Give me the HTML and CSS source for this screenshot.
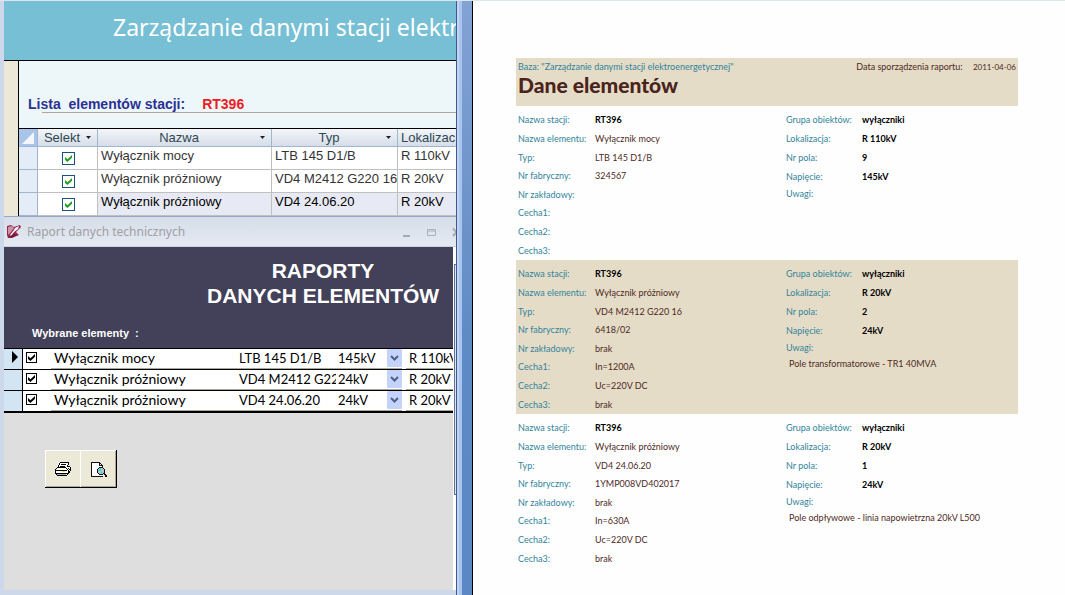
FILE: index.html
```html
<!DOCTYPE html>
<html lang="pl">
<head>
<meta charset="utf-8">
<title>Zarządzanie danymi stacji</title>
<link rel="stylesheet" href="styles.css">
</head>
<body>
<div class="desktop">
  <div class="forms">
    <section class="station">
      <h1 class="station-title">Zarządzanie danymi stacji elektr</h1>
      <div class="station-body">
        <div class="station-caption">
          <span class="caption-label">Lista&nbsp; elementów stacji:</span>
          <span class="caption-value">RT396</span>
        </div>
        <table class="sheet">
          <colgroup><col class="c-mark"><col class="c-sel"><col class="c-name"><col class="c-type"><col></colgroup>
          <thead>
            <tr>
              <th class="corner"><svg width="12" height="12" viewBox="0 0 12 12"><path d="M12 0V12H0z" fill="#f4f8fd"/></svg></th>
              <th><div class="head"><span>Selekt</span><svg class="tri" viewBox="0 0 5 3"><path d="M0 0h5L2.500 3z"/></svg></div></th>
              <th><div class="head"><span>Nazwa</span><svg class="tri" viewBox="0 0 5 3"><path d="M0 0h5L2.500 3z"/></svg></div></th>
              <th><div class="head"><span>Typ</span><svg class="tri" viewBox="0 0 5 3"><path d="M0 0h5L2.500 3z"/></svg></div></th>
              <th><div class="head start">Lokalizac</div></th>
            </tr>
          </thead>
          <tbody>
            <tr><td class="mark"></td><td class="tick"><input type="checkbox" class="check green" aria-label="Wybierz LTB 145 D1/B" checked></td><td>Wyłącznik mocy</td><td>LTB 145 D1/B</td><td>R 110kV</td></tr>
            <tr><td class="mark"></td><td class="tick"><input type="checkbox" class="check green" aria-label="Wybierz VD4 M2412 G220 16" checked></td><td>Wyłącznik próżniowy</td><td>VD4 M2412 G220 16</td><td>R 20kV</td></tr>
            <tr class="current"><td class="mark"></td><td class="tick"><input type="checkbox" class="check green" aria-label="Wybierz VD4 24.06.20" checked></td><td>Wyłącznik próżniowy</td><td>VD4 24.06.20</td><td>R 20kV</td></tr>
          </tbody>
        </table>
      </div>
    </section>

    <section class="dialog">
      <header class="titlebar">
        <svg width="16" height="16" viewBox="0 0 16 16"><path d="M1 2L5 1L8 3L14 1L15 3L10 8L13 11L6 14L2 14L1 11z" fill="#96284f"/><path d="M2 3L6 2L8 4L5 8L2 11z" fill="#c994ac"/><path d="M9 4L13 2L12 5L8 8L5 12L4 11L8 6z" fill="#fff"/><path d="M3 13L8 10L11 11L5 14z" fill="#6d1a3a"/></svg>
        <h2 class="dialog-name">Raport danych technicznych</h2>
        <div class="window-buttons">
          <button type="button" aria-label="Minimalizuj"><svg width="10" height="10" viewBox="0 0 10 10"><path d="M1 8h7v2H1z" fill="#a3abb8"/></svg></button>
          <button type="button" aria-label="Maksymalizuj"><svg width="10" height="10" viewBox="0 0 10 10"><path d="M.5 2.500h8v6h-8zM.5 4h8" fill="none" stroke="#a9b2c0"/></svg></button>
          <button type="button" aria-label="Zamknij"><svg width="10" height="10" viewBox="0 0 10 10"><path d="M1 1.500L8 9M8 1.500L1 9" fill="none" stroke="#a3abb8" stroke-width="2"/></svg></button>
        </div>
      </header>
      <div class="dialog-main">
        <div class="dialog-form">
          <div class="banner">
            <h3 class="banner-title">RAPORTY<br>DANYCH ELEMENTÓW</h3>
            <p class="banner-note">Wybrane elementy&nbsp; :</p>
          </div>
          <ul class="records">
            <li class="record">
              <span class="pointer"><svg width="6" height="12" viewBox="0 0 6 12"><path d="M0 0L6 6L0 12z"/></svg></span>
              <span class="pick"><input type="checkbox" class="check black" aria-label="Drukuj LTB 145 D1/B" checked></span>
              <span class="field name">Wyłącznik mocy</span><span class="field">LTB 145 D1/B</span>
              <span class="combo"><select aria-label="Napięcie"><option>145kV</option></select><svg width="15" height="18" viewBox="0 0 15 18"><rect width="15" height="18" rx="1" fill="#c3d3fb"/><path d="M4 7L7.500 10.500L11 7" fill="none" stroke="#4d6185" stroke-width="2"/></svg></span>
              <span class="field">R 110kV</span>
            </li>
            <li class="record">
              <span class="pointer"></span>
              <span class="pick"><input type="checkbox" class="check black" aria-label="Drukuj VD4 M2412 G220 16" checked></span>
              <span class="field name">Wyłącznik próżniowy</span><span class="field">VD4 M2412 G22</span>
              <span class="combo"><select aria-label="Napięcie"><option>24kV</option></select><svg width="15" height="18" viewBox="0 0 15 18"><rect width="15" height="18" rx="1" fill="#c3d3fb"/><path d="M4 7L7.500 10.500L11 7" fill="none" stroke="#4d6185" stroke-width="2"/></svg></span>
              <span class="field">R 20kV</span>
            </li>
            <li class="record">
              <span class="pointer"></span>
              <span class="pick"><input type="checkbox" class="check black" aria-label="Drukuj VD4 24.06.20" checked></span>
              <span class="field name">Wyłącznik próżniowy</span><span class="field">VD4 24.06.20</span>
              <span class="combo"><select aria-label="Napięcie"><option>24kV</option></select><svg width="15" height="18" viewBox="0 0 15 18"><rect width="15" height="18" rx="1" fill="#c3d3fb"/><path d="M4 7L7.500 10.500L11 7" fill="none" stroke="#4d6185" stroke-width="2"/></svg></span>
              <span class="field">R 20kV</span>
            </li>
          </ul>
          <div class="actions">
            <button type="button" aria-label="Drukuj">
              <svg width="16" height="14" viewBox="0 0 16 14" shape-rendering="crispEdges"><path d="M5 0h9v1l-1 3h2v1h1v4h-1v2h-1v1h-1v2H2v-1H0V7h1V6h1V5h1V4h1V2h1z" fill="#fff"/><path d="M5 0h9v1H5zM4 1h1v2H4zM13 1h1v2h-1zM3 3h1v2H3zM12 3h1v2h-1zM6 2h5v1H6zM5 4h5v1H5zM2 5h9v1H2zM1 6h1v1H1zM13 4h2v1h-2zM15 5h1v4h-1zM11 6h1v1h-1zM13 6h1v1h-1zM12 7h1v1h-1zM14 7h1v1h-1zM0 8h12v1H0zM0 7h1v5H0zM13 8h1v4h-1zM14 9h1v2h-1zM1 11h12v1H1zM1 12h1v1H1zM12 12h1v1h-1zM2 13h10v1H2z" fill="#000"/><path d="M7 9h3v1H7z" fill="#ee0"/><path d="M2 12h9v1H2z" fill="#aaa"/></svg>
            </button>
            <button type="button" aria-label="Podgląd wydruku">
              <svg width="16" height="15" viewBox="0 0 16 15" shape-rendering="crispEdges"><path d="M1 1h8v3h3v10H1z" fill="#fff"/><path d="M0 0h9v1H0zM0 0h1v15H0zM0 14h12v1H0zM8 1h1v3H8zM9 1h1v1H9zM10 2h1v1h-1zM11 3h1v2h-1zM9 3h2v1H9zM8 5h4v1H8zM7 6h1v1H7zM6 7h1v4H6zM7 11h1v1H7zM8 12h4v1H8zM12 6h1v1h-1zM13 7h1v4h-1zM12 11h2v1h-2zM13 12h2v1h-2zM14 13h2v2h-2z" fill="#111"/><path d="M8 6h4v1h1v4h-1v1H8v-1H7V7h1z" fill="#b9c0c2"/><path d="M8 7h2v1H8zM7 8h2v1H7zM9 6h1v3H9zM10 10h2v1h-2z" fill="#18e5e5"/></svg>
            </button>
          </div>
        </div>
        <div class="scroll"><div class="thumb"></div></div>
      </div>
    </section>
  </div>

  <div class="divider"></div>

  <main class="report">
    <header class="report-head">
      <div><p class="report-base">Baza: "Zarządzanie danymi stacji elektroenergetycznej"</p><h2 class="report-title">Dane elementów</h2></div>
      <p class="report-date">Data sporządzenia raportu: <time>2011-04-06</time></p>
    </header>

    <section class="item">
      <dl class="props">
        <dt>Nazwa stacji:</dt><dd class="key">RT396</dd>
        <dt>Nazwa elementu:</dt><dd>Wyłącznik mocy</dd>
        <dt>Typ:</dt><dd>LTB 145 D1/B</dd>
        <dt>Nr fabryczny:</dt><dd>324567</dd>
        <dt>Nr zakładowy:</dt><dd></dd>
        <dt>Cecha1:</dt><dd></dd>
        <dt>Cecha2:</dt><dd></dd>
        <dt>Cecha3:</dt><dd></dd>
      </dl>
      <dl class="props side">
        <dt>Grupa obiektów:</dt><dd class="key">wyłączniki</dd>
        <dt>Lokalizacja:</dt><dd class="key">R 110kV</dd>
        <dt>Nr pola:</dt><dd class="key">9</dd>
        <dt>Napięcie:</dt><dd class="key">145kV</dd>
        <dt>Uwagi:</dt><dd class="note"></dd>
      </dl>
    </section>

    <section class="item shaded">
      <dl class="props">
        <dt>Nazwa stacji:</dt><dd class="key">RT396</dd>
        <dt>Nazwa elementu:</dt><dd>Wyłącznik próżniowy</dd>
        <dt>Typ:</dt><dd>VD4 M2412 G220 16</dd>
        <dt>Nr fabryczny:</dt><dd>6418/02</dd>
        <dt>Nr zakładowy:</dt><dd>brak</dd>
        <dt>Cecha1:</dt><dd>In=1200A</dd>
        <dt>Cecha2:</dt><dd>Uc=220V DC</dd>
        <dt>Cecha3:</dt><dd>brak</dd>
      </dl>
      <dl class="props side">
        <dt>Grupa obiektów:</dt><dd class="key">wyłączniki</dd>
        <dt>Lokalizacja:</dt><dd class="key">R 20kV</dd>
        <dt>Nr pola:</dt><dd class="key">2</dd>
        <dt>Napięcie:</dt><dd class="key">24kV</dd>
        <dt>Uwagi:</dt><dd class="note">Pole transformatorowe - TR1 40MVA</dd>
      </dl>
    </section>

    <section class="item">
      <dl class="props">
        <dt>Nazwa stacji:</dt><dd class="key">RT396</dd>
        <dt>Nazwa elementu:</dt><dd>Wyłącznik próżniowy</dd>
        <dt>Typ:</dt><dd>VD4 24.06.20</dd>
        <dt>Nr fabryczny:</dt><dd>1YMP008VD402017</dd>
        <dt>Nr zakładowy:</dt><dd>brak</dd>
        <dt>Cecha1:</dt><dd>In=630A</dd>
        <dt>Cecha2:</dt><dd>Uc=220V DC</dd>
        <dt>Cecha3:</dt><dd>brak</dd>
      </dl>
      <dl class="props side">
        <dt>Grupa obiektów:</dt><dd class="key">wyłączniki</dd>
        <dt>Lokalizacja:</dt><dd class="key">R 20kV</dd>
        <dt>Nr pola:</dt><dd class="key">1</dd>
        <dt>Napięcie:</dt><dd class="key">24kV</dd>
        <dt>Uwagi:</dt><dd class="note">Pole odpływowe - linia napowietrzna 20kV L500</dd>
      </dl>
    </section>
  </main>
</div>
</body>
</html>
```
FILE: styles.css
```css
* { box-sizing: border-box; }
body, h1, h2, h3, p, ul, dl, dd { margin: 0; padding: 0; }
body { font-family: "Liberation Sans", Arial, sans-serif; font-size: 14px; background: #fff; }
svg { display: block; flex: none; }
button { appearance: none; border: 0; padding: 0; background: none; display: grid; place-items: center; }

.desktop {
  display: grid;
  grid-template-columns: minmax(0, 456fr) 17px minmax(0, 592fr);
  min-height: 100vh;
  border-top: 1px solid #dce6f1;
}
.forms { display: flex; flex-direction: column; min-width: 0; }

/* Station window */
.station { border-left: 4px solid #cdd9ea; }
.station-title {
  height: 60px;
  padding-left: 109px;
  border-bottom: 1px solid #000;
  background: #76bfd4;
  color: #fff;
  font: 400 23px/52px "Noto Sans", "Open Sans", sans-serif;
  white-space: nowrap;
  overflow: hidden;
}
.station-body { padding-left: 14px; background: #ece8d8; }
.station-caption {
  display: flex;
  align-items: center;
  gap: 17px;
  height: 67px;
  padding: 18px 0 0 9px;
  border-left: 1px solid #000;
  background: linear-gradient(#b0a596, #b0a596) 23px 51px / 100% 1px no-repeat #edf6f9;
  font-weight: 700;
  white-space: nowrap;
}
.caption-label { color: #2b3193; }
.caption-value { color: #ed1c24; }

.sheet {
  width: 100%;
  table-layout: fixed;
  border-collapse: separate;
  border-spacing: 0;
  border: solid #000;
  border-width: 1px 0 0 1px;
  background: #fff;
  color: #333;
  font-size: 13px;
}
.c-mark { width: 19px; }
.c-sel { width: 60px; }
.c-name { width: 174px; }
.c-type { width: 126px; }
.sheet th {
  height: 18px;
  padding: 0;
  font-weight: 400;
  color: #2f4750;
  background: linear-gradient(#f3f6fa, #d6dde9);
  border: solid #9eb6ce;
  border-width: 0 1px 1px 0;
}
.sheet th.corner { background: #a9c4e9; }
.corner svg { margin: 0 auto; }
.head { display: flex; align-items: center; padding: 0 6px 0 0; line-height: 16px; white-space: nowrap; overflow: hidden; }
.head span { flex: 1; text-align: center; }
.head.start { padding: 0 0 0 3px; }
.tri { width: 5px; height: 3px; fill: #222; }
.sheet td {
  height: 23px;
  padding: 0 0 4px 3px;
  line-height: 16px;
  border: solid #c0c0c0;
  border-width: 0 1px 1px 0;
  white-space: nowrap;
  overflow: hidden;
}
.sheet th:last-child, .sheet td:last-child { border-right: 0; }
.sheet td.mark { background: #e4ecf7; border-color: #9eb6ce; }
.sheet td.tick { padding: 0 0 0 2px; background: #fff; }
.current td { background: #e7eaf4; color: #000; }

.check { appearance: none; display: block; margin: 0; background: #fff; }
.check::before { content: ""; display: block; clip-path: polygon(0 30%, 35% 60%, 100% 0, 100% 40%, 35% 100%, 0 70%); }
.check.green { width: 13px; height: 13px; margin: 1px auto 0; border: 1px solid #1c5180; }
.check.green::before { width: 7px; height: 7px; margin: 2px; background: #21a121; }
.check.black { width: 11px; height: 11px; border: 1px solid #000; }
.check.black::before { width: 7px; height: 7px; margin: 1px; background: #000; }

/* Report dialog */
.dialog {
  flex: 1;
  display: flex;
  flex-direction: column;
  border: solid #cdd9ea;
  border-width: 0 0 5px 4px;
  background: #cdd9ea;
}
.titlebar {
  display: flex;
  align-items: center;
  gap: 5px;
  height: 31px;
  padding-left: 2px;
  border-top: 1px solid #98a7c2;
  border-bottom: 1px solid #c5d3de;
  background: linear-gradient(#d5dde8, #e5eaf2);
  overflow: hidden;
}
.dialog-name { flex: 1; font: 400 12px/16px "Noto Sans", sans-serif; color: #a0a0a4; white-space: nowrap; }
.window-buttons { display: flex; gap: 15px; width: 54px; overflow: hidden; }
.dialog-main { flex: 1; display: flex; }
.dialog-form { flex: 1; min-width: 0; background: #dedede; }
.banner { height: 101px; padding: 11px 14px 0 28px; background: #424159; color: #fff; }
.banner-title { width: 232px; margin-left: auto; text-align: center; font-size: 21px; line-height: 25px; white-space: nowrap; }
.banner-note { margin-top: 17px; font-size: 11px; line-height: 16px; font-weight: 700; }

.records { list-style: none; border: solid #000; border-width: 1px 0; font: 13px/18px Lato, sans-serif; }
.record {
  display: grid;
  grid-template-columns: 19px 28px 188px 97px 70px minmax(0, 1fr);
  height: 21px;
  border-bottom: 1px solid #000;
  background: #fff;
}
.pointer { display: grid; place-items: center end; padding: 0 4px 4px 0; background: #d3e4f2; border-right: 1px solid #000; }
.pick { padding: 3px 0 0 3px; }
.field, .combo { border-bottom: 1px solid #aaa79c; white-space: nowrap; overflow: hidden; }
.field.name { padding-left: 3px; font-size: 14px; }
.combo { display: grid; grid-template-columns: 1fr; align-items: start; margin-right: 4px; }
.combo select, .combo svg { grid-area: 1 / 1; }
.combo select { appearance: none; width: 100%; height: 18px; border: 0; padding: 0 0 0 2px; background: none; font: inherit; color: #000; }
.combo svg { justify-self: end; pointer-events: none; }
.combo + .field { padding-left: 3px; }

.actions { display: inline-flex; margin: 37px 0 0 41px; border: solid #000; border-width: 0 1px 1px 0; }
.actions button { width: 35px; height: 37px; background: #ece9d8; border: solid #fff; border-width: 1px 0 0 1px; box-shadow: inset 0 -1px #aca899; }
.actions button:last-child { width: 36px; box-shadow: inset -1px -1px #aca899; }

.scroll { display: flex; flex-direction: column; width: 3px; padding: 17px 0 95px; background: #fff; }
.thumb { flex: 1; border: solid #5f6f96; border-width: 1px 0 1px 1px; margin-left: 1px; background: #dfe6f2; }

.divider {
  border: solid #3b5a90;
  border-width: 0 0 0 1px;
  box-shadow: inset -1px 0 #000;
  background:
    linear-gradient(#000, #000) right / 1px 100% no-repeat,
    linear-gradient(90deg, #c3d5ef 2px, #a9c4ee 2px 5px, transparent 5px),
    linear-gradient(#83a2d4, #5d8ac4 60%, #5b88c4);
}

/* Printed report */
.report { padding: 57px 47px 27px 43px; background: #fefefe; font: 9px/14px Lato, sans-serif; color: #4e2a1e; }
.report-head { display: flex; justify-content: space-between; height: 48px; padding: 2px; background: #e5dcc7; white-space: nowrap; }
.report-base { color: #31849b; }
.report-title { font-size: 21px; line-height: 22px; font-weight: 900; color: #4a241c; }
.report-date time { margin-left: 8px; font-size: 8px; }
.item { display: grid; grid-template-columns: 268fr 234fr; min-height: 154px; }
.item.shaded { background: #e5dcc7; }
.props { display: grid; grid-template: repeat(8, 1fr) / 77px minmax(0, 1fr); align-items: center; padding: 5px 0 0 2px; white-space: nowrap; }
.props.side { grid-template: 18px 19px 19px 19px 15px 18px / 76px minmax(0, 1fr); align-content: start; }
.props dt { color: #31849b; }
.props .key { color: #000; font-weight: 700; }
.props .note { grid-column: 1 / 3; padding-left: 3px; }
```
